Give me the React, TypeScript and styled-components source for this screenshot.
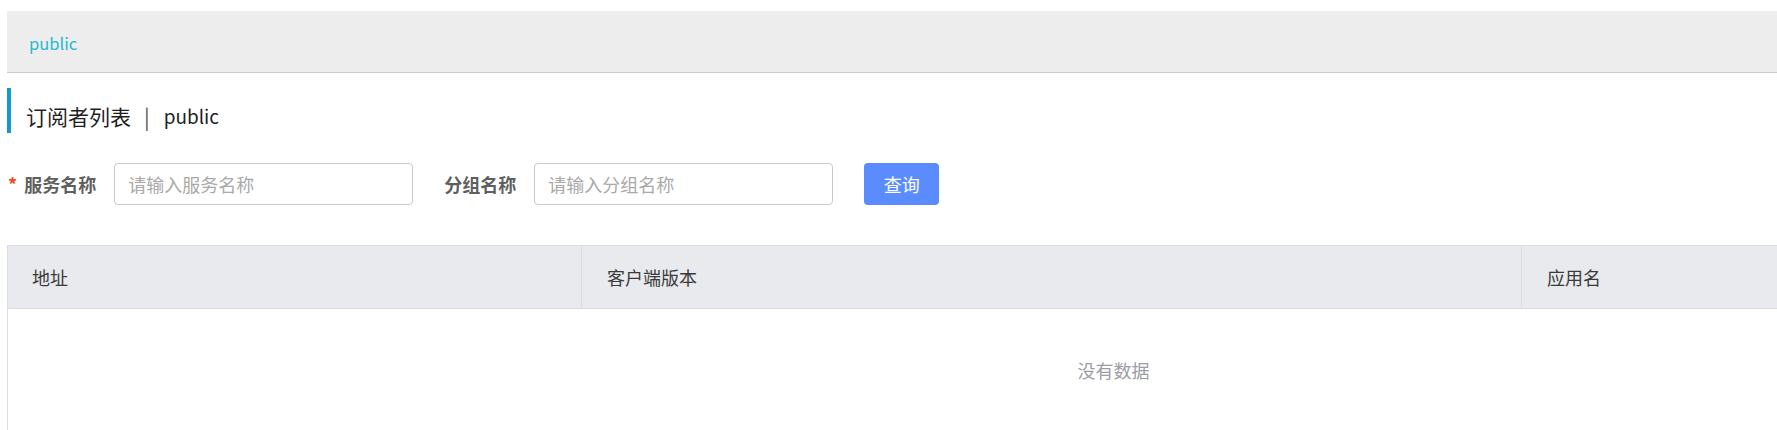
import React from 'react';
import styled, { createGlobalStyle } from 'styled-components';

const GlobalStyle = createGlobalStyle`
  html, body {
    margin: 0;
    padding: 0;
    background: #ffffff;
    overflow: hidden;
  }
  body {
    font-family: "Noto Sans CJK SC", "Noto Sans", sans-serif;
  }
  * {
    box-sizing: border-box;
  }
`;

const columns = [
  { title: '地址', width: 574 },
  { title: '客户端版本', width: 940 },
  { title: '应用名', width: 692 },
];

export default function App() {
  return (
    <>
      <GlobalStyle />
      <Page>
        <Breadcrumb>
          <BreadcrumbLink>public</BreadcrumbLink>
        </Breadcrumb>

        <PageTitle>
          订阅者列表<Divider>|</Divider>
          <TitleName>public</TitleName>
        </PageTitle>

        <SearchForm>
          <FormItem>
            <FormLabel required>服务名称</FormLabel>
            <TextInput placeholder="请输入服务名称" />
          </FormItem>
          <FormItem>
            <FormLabel>分组名称</FormLabel>
            <TextInput placeholder="请输入分组名称" />
          </FormItem>
          <QueryButton type="button">查询</QueryButton>
        </SearchForm>

        <Table>
          <HeadRow>
            {columns.map((col, i) => (
              <HeadCell key={col.title} $width={col.width} $first={i === 0}>
                {col.title}
              </HeadCell>
            ))}
          </HeadRow>
          <EmptyBody>
            <EmptyText>没有数据</EmptyText>
          </EmptyBody>
        </Table>
      </Page>
    </>
  );
}

const Page = styled.div`
  width: 2220px;
  padding: 11px 0 0 7px;
`;

const Breadcrumb = styled.div`
  height: 62px;
  background-color: #ededed;
  border-bottom: 1px solid #cbcbcb;
  display: flex;
  align-items: center;
  padding: 3px 0 0 22px;
`;

const BreadcrumbLink = styled.a`
  color: #1fbad6;
  font-size: 16.5px;
  cursor: pointer;
`;

const PageTitle = styled.h2`
  margin: 15px 0 0;
  height: 45px;
  border-left: 4px solid #109ad0;
  padding: 10px 0 0 15px;
  display: flex;
  align-items: center;
  font-size: 21px;
  font-weight: 400;
  color: #1f1f1f;
`;

const Divider = styled.span`
  margin: 0 14px 0 13px;
  color: #555;
`;

const TitleName = styled.span`
  font-size: 19px;
`;

const SearchForm = styled.form`
  margin-top: 30px;
  display: flex;
  align-items: center;
  height: 42px;
`;

const FormItem = styled.div`
  display: flex;
  align-items: center;
  margin-right: 31px;
`;

const FormLabel = styled.label<{ required?: boolean }>`
  font-size: 18px;
  font-weight: 700;
  color: #5f5f5f;
  margin-right: 18px;
  padding-left: ${(p) => (p.required ? '1px' : '0')};

  &::before {
    content: ${(p) => (p.required ? "'*'" : 'none')};
    color: #f24a22;
    margin-right: 7px;
    font-weight: 700;
  }
`;

const TextInput = styled.input`
  width: 299px;
  height: 42px;
  border: 1px solid #c8c9cd;
  border-radius: 4px;
  padding: 0 13px;
  font-family: inherit;
  font-size: 18px;
  color: #333;
  outline: none;

  &::placeholder {
    color: #a9a9a9;
  }
`;

const QueryButton = styled.button`
  width: 75px;
  height: 42px;
  border: none;
  border-radius: 4px;
  background-color: #5b8cff;
  color: #ffffff;
  font-family: inherit;
  font-size: 18px;
  cursor: pointer;
`;

const Table = styled.div`
  margin-top: 40px;
  border-left: 1px solid #dcdde2;
  border-top: 1px solid #dcdde2;
`;

const HeadRow = styled.div`
  display: flex;
  height: 63px;
  background-color: #e9eaee;
  border-bottom: 1px solid #dcdde2;
`;

const HeadCell = styled.div<{ $width: number; $first?: boolean }>`
  width: ${(p) => p.$width}px;
  flex-shrink: 0;
  display: flex;
  align-items: center;
  padding-left: ${(p) => (p.$first ? '24px' : '25px')};
  border-right: 1px solid #dcdde2;
  font-size: 18px;
  color: #3a3a3a;
`;

const EmptyBody = styled.div`
  height: 140px;
  display: flex;
  justify-content: center;
  padding-top: 49px;
  border-right: 1px solid #dcdde2;
`;

const EmptyText = styled.span`
  font-size: 18px;
  color: #9b9ca6;
  line-height: 24px;
`;
